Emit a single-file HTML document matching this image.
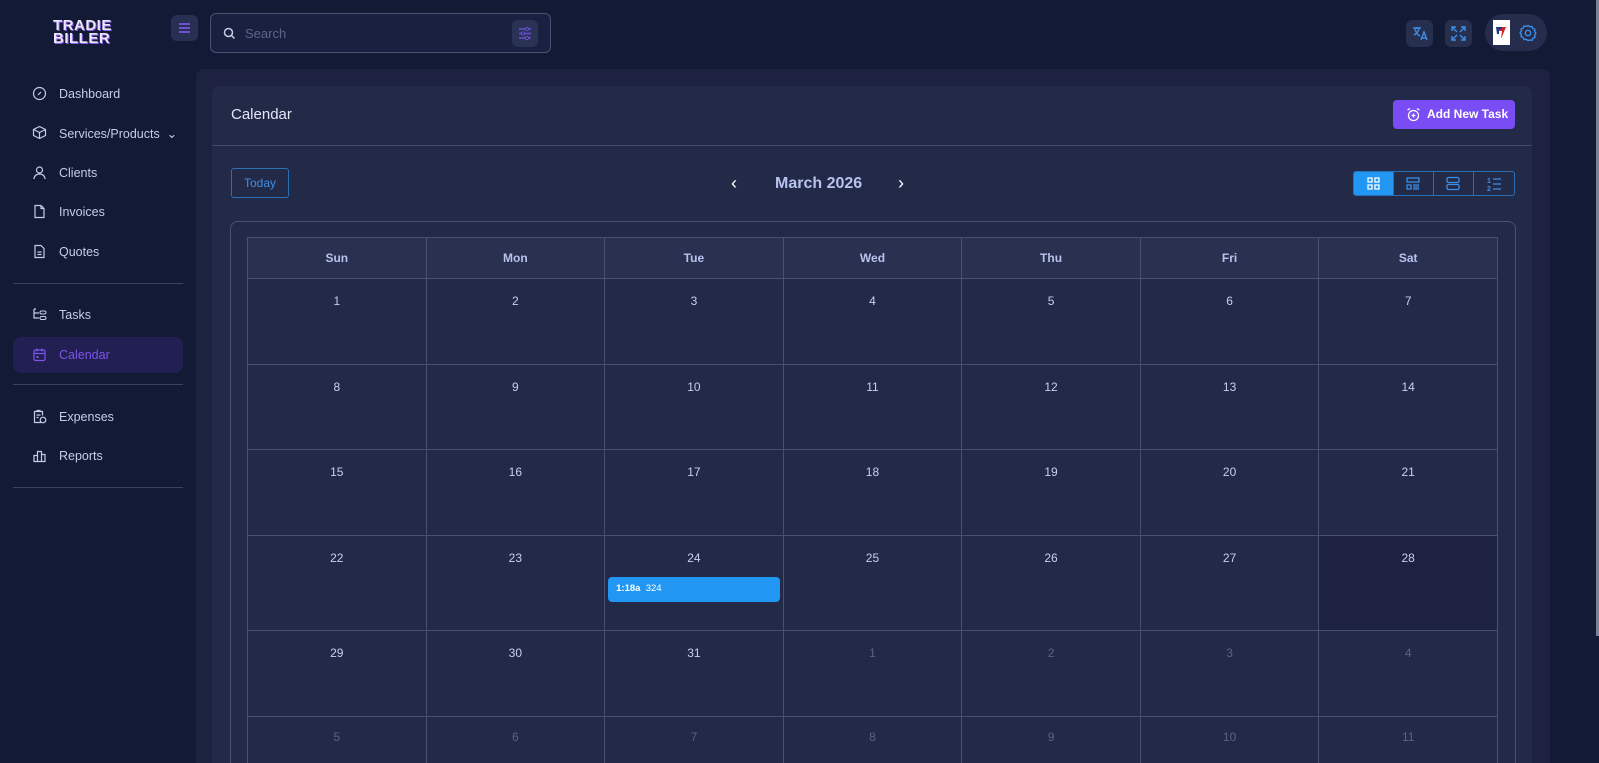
<!DOCTYPE html>
<html><head><meta charset="utf-8"><style>
*{box-sizing:border-box;margin:0;padding:0}
html,body{width:1599px;height:763px;overflow:hidden}
body{background:#131a36;font-family:"Liberation Sans",sans-serif;color:#cdd3ea}
#w{position:relative;width:1599px;height:763px;overflow:hidden}
.abs{position:absolute}
.logo{left:53px;top:19px;font-weight:900;font-size:15px;line-height:13px;color:#e9e6f6;letter-spacing:0.5px;text-shadow:1px 1px 0 #8a5cf0}
.ham{left:171px;top:15px;width:27px;height:26px;border-radius:6px;background:#272f52}
.search{left:210px;top:13px;width:341px;height:40px;border:1px solid #4a5272;border-radius:6px;background:#1a2140}
.search span{position:absolute;left:34px;top:12px;font-size:13px;color:#5c6688}
.filt{position:absolute;right:12px;top:6px;width:26px;height:27px;border-radius:6px;background:#2a3255}
.ib{width:27px;height:27px;border-radius:6px;background:#272f4f}
.prof{left:1485px;top:14px;width:62px;height:37px;border-radius:19px;background:#252c4c}
.nav{left:13px;width:170px;height:36px;border-radius:8px}
.nav span{position:absolute;left:46px;top:11px;font-size:12.5px;color:#c6cce6}
.nav svg{position:absolute;left:19px;top:10px}
.hr{left:13px;width:170px;height:1px;background:#3a4162}
.main{left:196px;top:69px;width:1354px;height:694px;background:#1c2240;border-radius:8px 8px 0 0}
.card{left:212px;top:86px;width:1320px;height:677px;background:#222a47;border-radius:8px 8px 0 0}
#clip{position:absolute;left:230px;top:221px;width:1286px;height:542px;overflow:hidden}
table{border-collapse:collapse;position:absolute;left:17px;top:16px;width:1251px;table-layout:fixed}
td,th{border:1px solid #4a5170;text-align:center;vertical-align:top;font-size:12px}
th{height:41px;background:#2a3150;color:#b7c3ee;font-weight:700;vertical-align:middle}
td{height:85.5px;padding-top:15px;color:#c8d0ec}
td.o{color:#5a6384}
.vb{top:171px;height:25px;width:40.5px;border:1px solid #2b6fb8}
</style></head><body><div id="w">
<div class="abs logo">TRADIE<br>BILLER</div>
<div class="abs ham"><svg width="27" height="26"><path d="M8 9h11M8 13h11M8 17h11" stroke="#7a55e0" stroke-width="1.8"/></svg></div>
<div class="abs search"><svg style="position:absolute;left:12px;top:13px" width="13" height="13"><circle cx="5.5" cy="5.5" r="4" stroke="#c8cde0" stroke-width="1.5" fill="none"/><path d="M8.5 8.5l3 3" stroke="#c8cde0" stroke-width="1.5"/></svg><span>Search</span><div class="filt"><svg width="26" height="27"><path d="M7 9h12M7 13.5h12M7 18h12" stroke="#6a4fd0" stroke-width="1.5"/><circle cx="15" cy="9" r="1.6" fill="#2a3255" stroke="#6a4fd0"/><circle cx="11" cy="13.5" r="1.6" fill="#2a3255" stroke="#6a4fd0"/><circle cx="15" cy="18" r="1.6" fill="#2a3255" stroke="#6a4fd0"/></svg></div></div>
<div class="abs ib" style="left:1406px;top:20px"><svg width="27" height="27"><path d="M7 8h8M11 7v2M9 9c1 4 3 6 5 7M13 9c-1 3-3 5-5 6M15 20l3-8 3 8M16 18h4" stroke="#3d8ee8" stroke-width="1.4" fill="none"/></svg></div>
<div class="abs ib" style="left:1445px;top:20px"><svg width="27" height="27"><path d="M7 11V7h4M7 7l5 5M20 11V7h-4M20 7l-5 5M7 16v4h4M7 20l5-5M20 16v4h-4M20 20l-5-5" stroke="#3d8ee8" stroke-width="1.4" fill="none"/></svg></div>
<div class="abs prof"><div class="abs" style="left:8px;top:6px;width:17px;height:25px;background:#fff"><svg width="17" height="25"><path d="M3 7h10l-5 12 1-8H5z" fill="#d0202a"/><path d="M3 7h6v2H6v5H4z" fill="#1a3a8a"/></svg></div><svg class="abs" style="left:33px;top:9px" width="20" height="20"><circle cx="10" cy="10" r="2.7" stroke="#3d8ee8" stroke-width="1.4" fill="none"/><path d="M10 2.5l1.8 1.2 2.2-.2.9 2 2 .9-.2 2.2 1.2 1.8-1.2 1.8.2 2.2-2 .9-.9 2-2.2-.2L10 17.5l-1.8-1.2-2.2.2-.9-2-2-.9.2-2.2L2.1 10l1.2-1.8-.2-2.2 2-.9.9-2 2.2.2z" stroke="#3d8ee8" stroke-width="1.4" fill="none"/></svg></div>

<div class="abs nav" style="top:76px"><svg width="15" height="15"><circle cx="7.5" cy="7.5" r="6" stroke="#c6cce6" stroke-width="1.2" fill="none"/><path d="M6 9l3-3" stroke="#c6cce6" stroke-width="1.2"/></svg><span>Dashboard</span></div>
<div class="abs nav" style="top:115px"><svg width="15" height="15"><path d="M7.5 1.5l6 3v6l-6 3-6-3v-6zM1.5 4.5l6 3 6-3M7.5 7.5v6" stroke="#c6cce6" stroke-width="1.2" fill="none"/></svg><span>Services/Products &nbsp;⌄</span></div>
<div class="abs nav" style="top:155px"><svg width="15" height="15"><circle cx="7.5" cy="5" r="3" stroke="#c6cce6" stroke-width="1.2" fill="none"/><path d="M2 14c0-3 2.5-5 5.5-5s5.5 2 5.5 5" stroke="#c6cce6" stroke-width="1.2" fill="none"/></svg><span>Clients</span></div>
<div class="abs nav" style="top:194px"><svg width="15" height="15"><path d="M3 1.5h6l3 3v9H3zM9 1.5v3h3" stroke="#c6cce6" stroke-width="1.2" fill="none"/></svg><span>Invoices</span></div>
<div class="abs nav" style="top:234px"><svg width="15" height="15"><path d="M3 1.5h6l3 3v9H3zM5.5 8h4M5.5 10.5h4" stroke="#c6cce6" stroke-width="1.2" fill="none"/></svg><span>Quotes</span></div>
<div class="abs hr" style="top:283px"></div>
<div class="abs nav" style="top:297px"><svg width="15" height="15"><path d="M2 2v9h5M2 6h5M4 2h-2" stroke="#c6cce6" stroke-width="1.2" fill="none"/><rect x="8" y="4" width="6" height="3" rx="1.5" stroke="#c6cce6" fill="none"/><rect x="8" y="9.5" width="6" height="3" rx="1.5" stroke="#c6cce6" fill="none"/></svg><span>Tasks</span></div>
<div class="abs nav" style="top:337px;background:#221f52"><svg width="15" height="15"><rect x="2" y="3" width="11" height="10.5" rx="1.5" stroke="#7c55ea" stroke-width="1.2" fill="none"/><path d="M2 6.5h11M5 1.5v3M10 1.5v3" stroke="#7c55ea" stroke-width="1.2"/><rect x="4.5" y="9" width="2" height="2" fill="#7c55ea"/></svg><span style="color:#7c55ea">Calendar</span></div>
<div class="abs hr" style="top:384px"></div>
<div class="abs nav" style="top:399px"><svg width="15" height="15"><path d="M9 13.5H2.5v-11h8v4M5 2.5v-1h3v1M4.5 6h4M4.5 8.5h2" stroke="#c6cce6" stroke-width="1.2" fill="none"/><circle cx="11" cy="11" r="2.8" stroke="#c6cce6" stroke-width="1.2" fill="none"/></svg><span>Expenses</span></div>
<div class="abs nav" style="top:438px"><svg width="15" height="15"><path d="M1.5 13.5h12M2 13.5v-6h3.5v6M5.5 13.5v-10h4v10M9.5 13.5v-7h3.5v7" stroke="#c6cce6" stroke-width="1.2" fill="none"/></svg><span>Reports</span></div>
<div class="abs hr" style="top:487px"></div>

<div class="abs main"></div>
<div class="abs card"></div>
<div class="abs" style="left:231px;top:106px;font-size:15px;color:#e4e8f6">Calendar</div>
<div class="abs" style="left:1393px;top:100px;width:122px;height:29px;background:#7a4cf3;border-radius:4px;color:#fff;font-size:12px;font-weight:700;padding:7px 0 0 34px">Add New Task<svg class="abs" style="left:13px;top:7px" width="15" height="15"><circle cx="7.5" cy="8.5" r="5" stroke="#fff" stroke-width="1.3" fill="none"/><path d="M7.5 6.5v4M5.5 8.5h4M1.5 3l2.5-1.5M13.5 3L11 1.5" stroke="#fff" stroke-width="1.3"/></svg></div>
<div class="abs" style="left:212px;top:145px;width:1320px;height:1px;background:#444b6a"></div>

<div class="abs" style="left:231px;top:168px;width:58px;height:30px;border:1px solid #2b6fb8;border-radius:3px;color:#3d8ee8;font-size:12px;text-align:center;line-height:28px">Today</div>
<div class="abs" style="left:731px;top:173px;font-size:18px;color:#fff">‹</div>
<div class="abs" style="left:775px;top:175px;font-size:16px;font-weight:700;color:#b7c3ee">March 2026</div>
<div class="abs" style="left:898px;top:173px;font-size:18px;color:#fff">›</div>
<div class="abs vb" style="left:1353px;background:#2196f3;border-radius:3px 0 0 3px"><svg width="40" height="23"><path d="M14 6h4v4h-4zM21 6h4v4h-4zM14 13h4v4h-4zM21 13h4v4h-4z" stroke="#fff" stroke-width="1.3" fill="none"/></svg></div>
<div class="abs vb" style="left:1393px;border-left:none"><svg width="40" height="23"><path d="M14 6h12v4H14zM14 13h4v4h-4zM20 13h6M20 15h6M20 17h6" stroke="#3d8ee8" stroke-width="1.3" fill="none"/></svg></div>
<div class="abs vb" style="left:1433px;border-left:none"><svg width="40" height="23"><rect x="14" y="5.5" width="12" height="5" rx="1.5" stroke="#3d8ee8" stroke-width="1.3" fill="none"/><rect x="14" y="12.5" width="12" height="5" rx="1.5" stroke="#3d8ee8" stroke-width="1.3" fill="none"/></svg></div>
<div class="abs vb" style="left:1474px;border-left:none;border-radius:0 3px 3px 0"><svg width="40" height="23"><path d="M19 7h8M19 12h8M19 17h8" stroke="#3d8ee8" stroke-width="1.3"/><text x="13" y="11" font-size="7" fill="#3d8ee8" font-family="Liberation Sans" font-weight="700">1</text><text x="13" y="19" font-size="7" fill="#3d8ee8" font-family="Liberation Sans" font-weight="700">2</text></svg></div>

<div id="clip"><div class="abs" style="left:0;top:0;width:1286px;height:560px;border:1px solid #4a5170;border-radius:8px"></div>
<table>
<tr><th>Sun</th><th>Mon</th><th>Tue</th><th>Wed</th><th>Thu</th><th>Fri</th><th>Sat</th></tr>
<tr><td>1</td><td>2</td><td>3</td><td>4</td><td>5</td><td>6</td><td>7</td></tr>
<tr><td>8</td><td>9</td><td>10</td><td>11</td><td>12</td><td>13</td><td>14</td></tr>
<tr><td>15</td><td>16</td><td>17</td><td>18</td><td>19</td><td>20</td><td>21</td></tr>
<tr><td style="height:95.5px">22</td><td>23</td><td style="position:relative">24<div style="position:absolute;left:3px;top:41px;width:172px;height:25px;background:#2196f3;border-radius:4px;color:#fff;font-size:9.5px;text-align:left;padding:6px 0 0 8px"><b>1:18a</b>&nbsp; 324</div></td><td>25</td><td>26</td><td>27</td><td style="background:#1c2240">28</td></tr>
<tr><td>29</td><td>30</td><td>31</td><td class="o">1</td><td class="o">2</td><td class="o">3</td><td class="o">4</td></tr>
<tr><td class="o" style="padding-top:13px">5</td><td class="o" style="padding-top:13px">6</td><td class="o" style="padding-top:13px">7</td><td class="o" style="padding-top:13px">8</td><td class="o" style="padding-top:13px">9</td><td class="o" style="padding-top:13px">10</td><td class="o" style="padding-top:13px">11</td></tr>
</table></div>
<div class="abs" style="left:1596px;top:0;width:3px;height:636px;background:#7a8194"></div>
</div></body></html>
